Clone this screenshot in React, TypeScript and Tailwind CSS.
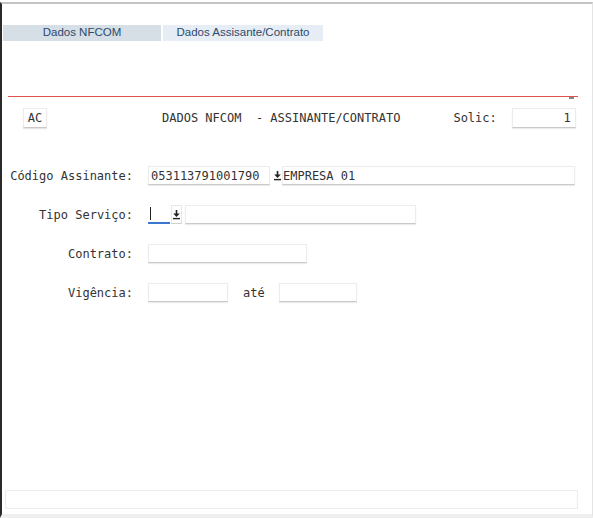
import React from 'react';

const mono = "font-['DejaVu_Sans_Mono','Liberation_Mono',monospace] text-[12px] text-[#333]";
const field = 'h-[19px] bg-white border border-[#ececec] border-b-[#c9c9c9] shadow-[0_1px_1px_rgba(0,0,0,0.08)]';

const DropIcon: React.FC = () => (
  <svg width="9" height="11" viewBox="0 0 9 11" className="text-[#222]">
    <path d="M4.5 1v5" stroke="currentColor" strokeWidth="1.6" />
    <path d="M1.2 4.6h6.6L4.5 8z" fill="currentColor" />
    <path d="M1 9.6h7" stroke="currentColor" strokeWidth="1.4" />
  </svg>
);

const Label: React.FC<{ text: string }> = ({ text }) => (
  <div className={`w-[131px] text-right ${mono}`}>{text}</div>
);

export default function App() {
  return (
    <div className="w-[593px] h-[518px] bg-white pt-[2px]">
      <div className="h-[516px] flex flex-col border-t-2 border-t-[#c4c4c4] border-l-2 border-l-[#2a2a2a] border-r border-r-[#e4e4e4] border-b-[4px] border-b-[#efefef]">
        {/* abas */}
        <div className="flex gap-[2px] mt-[21px] ml-[1px] font-['Liberation_Sans',Arial,sans-serif] text-[11.5px] text-[#2b4a6e]">
          <div className="w-[158px] h-[16px] bg-[#d6dee6] flex items-center justify-center">Dados NFCOM</div>
          <div className="w-[160px] h-[16px] bg-[#e6edf4] flex items-center justify-center">Dados Assisante/Contrato</div>
        </div>

        {/* linha vermelha */}
        <div className="relative mt-[55px] ml-[6px] w-[570px] h-px bg-[#e0524e]">
          <div className="absolute right-[4px] top-[1px] w-[5px] h-[2px] bg-[#888]" />
        </div>

        {/* cabeçalho */}
        <div className={`flex items-center mt-[11px] h-[20px] ${mono}`}>
          <div className="ml-[21px] w-[24px] h-[20px] bg-white border border-[#ececec] border-b-[#c9c9c9] shadow-[0_1px_1px_rgba(0,0,0,0.1)] flex items-center justify-center">AC</div>
          <div className="ml-[115px] whitespace-pre">DADOS NFCOM  - ASSINANTE/CONTRATO</div>
          <div className="ml-[53px]">Solic:</div>
          <div className={`ml-[15px] w-[64px] !h-[20px] ${field} flex items-center justify-end pr-[4px]`}>1</div>
        </div>

        {/* Código Assinante */}
        <div className="flex items-center mt-[38px] h-[19px]">
          <Label text="Código Assinante:" />
          <div className={`ml-[15px] w-[122px] ${field} flex items-center pl-[2px] ${mono}`}>053113791001790</div>
          <div className="ml-[2px] w-[10px] h-[19px] flex items-center justify-center"><DropIcon /></div>
          <div className={`w-[293px] ${field} flex items-center ${mono}`}>EMPRESA 01</div>
        </div>

        {/* Tipo Serviço */}
        <div className="flex items-center mt-[20px] h-[19px]">
          <Label text="Tipo Serviço:" />
          <div className="ml-[15px] w-[22px] h-[19px] bg-white border-b-2 border-b-[#3a78d0] flex items-center pl-[2px]">
            <div className="w-px h-[13px] bg-[#222]" />
          </div>
          <div className="ml-[1px] w-[11px] h-[19px] border border-[#e6e6e6] border-b-[#cfcfcf] flex items-center justify-center"><DropIcon /></div>
          <div className={`ml-[3px] w-[231px] ${field}`} />
        </div>

        {/* Contrato */}
        <div className="flex items-center mt-[20px] h-[19px]">
          <Label text="Contrato:" />
          <div className={`ml-[15px] w-[159px] ${field}`} />
        </div>

        {/* Vigência */}
        <div className="flex items-center mt-[20px] h-[19px]">
          <Label text="Vigência:" />
          <div className={`ml-[15px] w-[80px] ${field}`} />
          <div className={`ml-[15px] ${mono}`}>até</div>
          <div className={`ml-[14px] w-[78px] ${field}`} />
        </div>

        <div className="flex-1" />

        {/* rodapé */}
        <div className="ml-[3px] mb-[5px] w-[573px] h-[19px] border border-[#ededed] shadow-[inset_0_0_2px_rgba(0,0,0,0.04)]" />
      </div>
    </div>
  );
}
